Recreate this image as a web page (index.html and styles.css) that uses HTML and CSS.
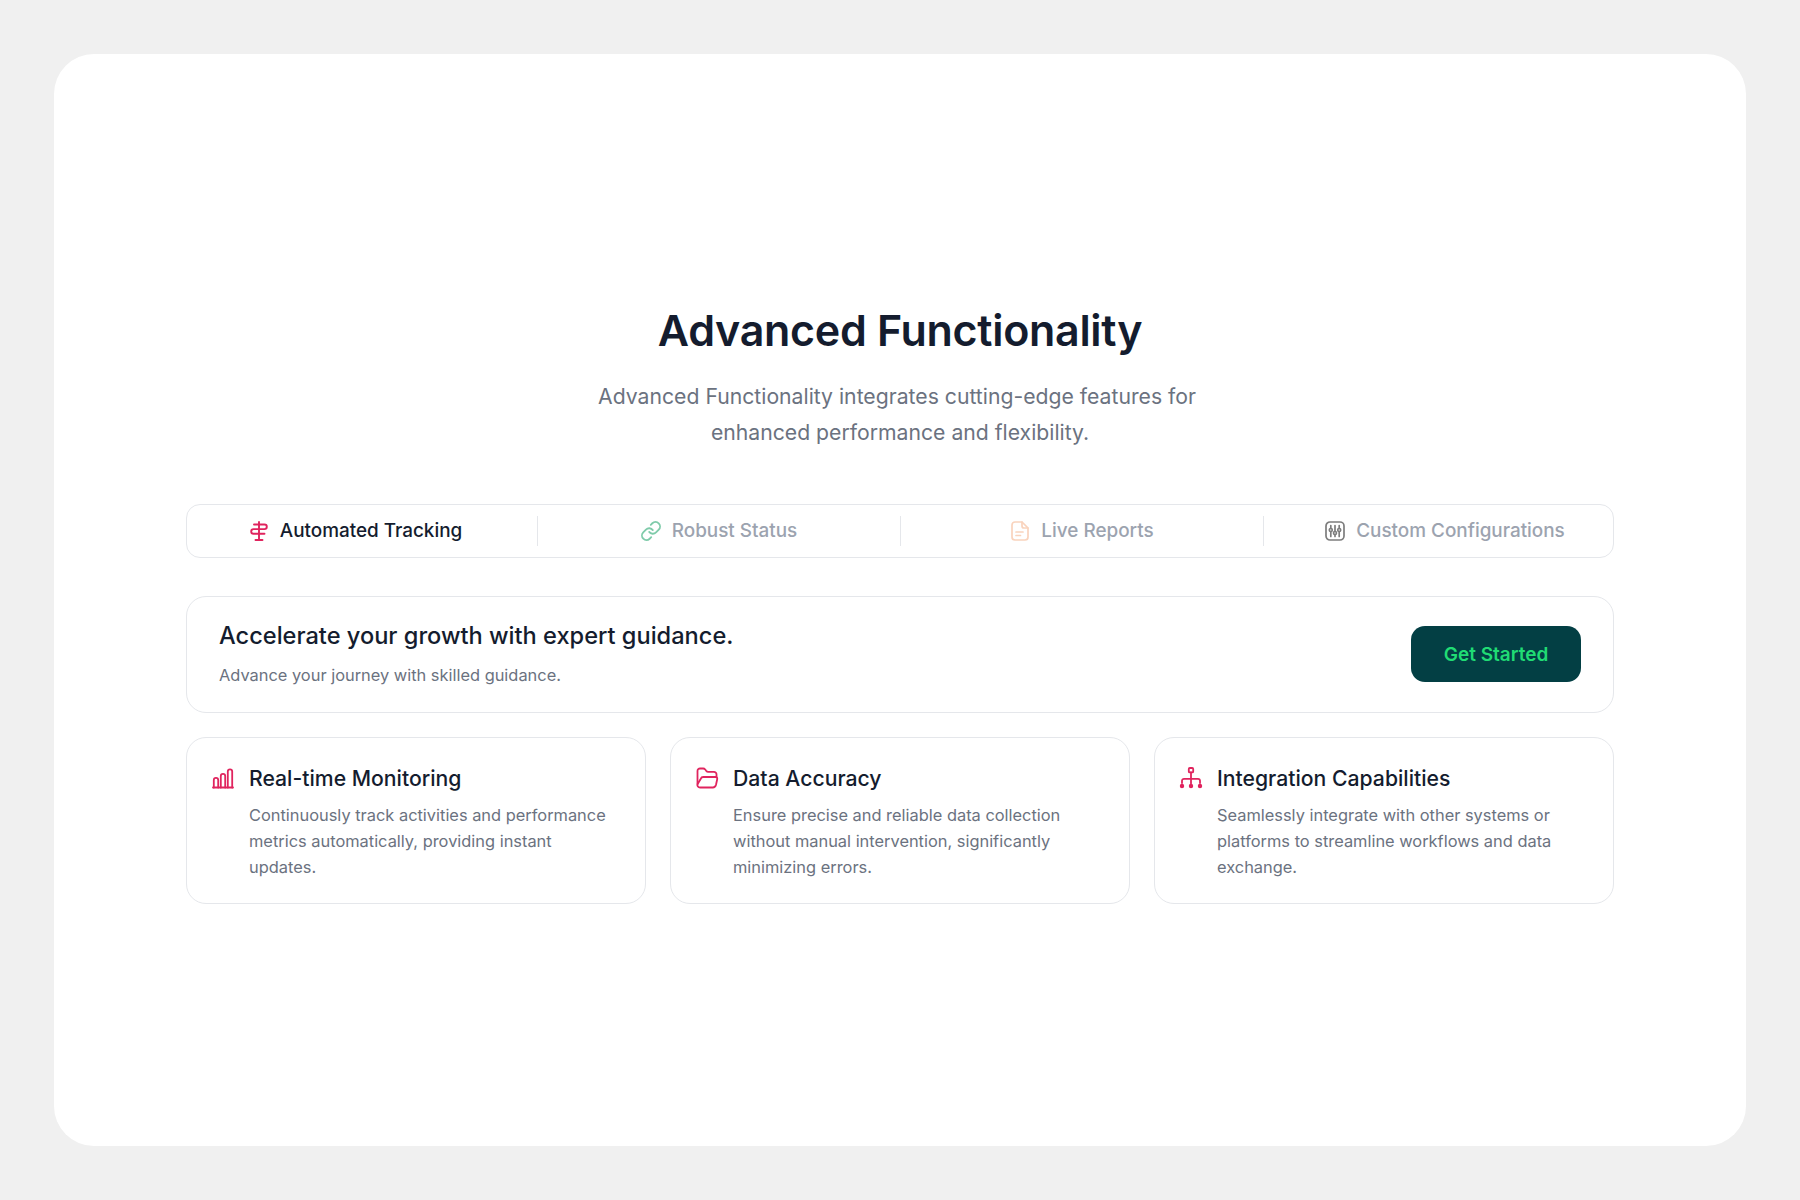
FILE: index.html
```html
<!DOCTYPE html>
<html lang="en">
<head>
    <meta charset="UTF-8">
    <meta name="viewport" content="width=device-width, initial-scale=1.0">
    <title>Advanced Functionality</title>
    <link rel="stylesheet" href="styles.css">
</head>
<body>
    <div class="panel">
        <div class="content">
            <div class="intro">
                <h1>Advanced Functionality</h1>
                <p>Advanced Functionality integrates cutting-edge features for&nbsp;<br>enhanced performance and flexibility.</p>
            </div>

            <div class="tabs">
                <div class="tab active">
                    <svg class="tab-icon" viewBox="0 0 20 20" fill="none" stroke="#e0245e" stroke-width="1.9" stroke-linecap="round" stroke-linejoin="round">
                        <path d="M10 1v18M6.5 19h7"/>
                        <path d="M5 3.5h10.5a2.3 2.3 0 0 1 0 4.6h-11a2.3 2.3 0 0 0 0 4.6h11"/>
                    </svg>
                    <span>Automated Tracking</span>
                </div>
                <div class="tab">
                    <svg class="tab-icon" viewBox="1 1 22 22" fill="none" stroke="#7fcbaa" stroke-width="2" stroke-linecap="round" stroke-linejoin="round">
                        <path d="M10 13a5 5 0 0 0 7.54.54l3-3a5 5 0 0 0-7.07-7.07l-1.72 1.71"/>
                        <path d="M14 11a5 5 0 0 0-7.54-.54l-3 3a5 5 0 0 0 7.07 7.07l1.71-1.71"/>
                    </svg>
                    <span>Robust Status</span>
                </div>
                <div class="tab">
                    <svg class="tab-icon" viewBox="0 0 20 20" fill="none" stroke="#f9d3bd" stroke-width="1.7" stroke-linecap="round" stroke-linejoin="round">
                        <path d="M12 1H5a3 3 0 0 0-3 3v12a3 3 0 0 0 3 3h10a3 3 0 0 0 3-3V7z"/>
                        <path d="M12 1v4a2 2 0 0 0 2 2h4M6 11h7M6 14.5h4.500"/>
                    </svg>
                    <span>Live Reports</span>
                </div>
                <div class="tab">
                    <svg class="tab-icon" viewBox="0 0 20 20" fill="none" stroke="#7d7d7d" stroke-width="1.7" stroke-linecap="round" stroke-linejoin="round">
                        <rect x="1" y="1" width="18" height="18" rx="4"/>
                        <path d="M5.8 4.5v2.5M5.8 11v4.500M10 4.500v5.500M10 14v1.500M14.200 4.500v2.500M14.200 11v4.500"/>
                        <circle cx="5.8" cy="9" r="1.5"/>
                        <circle cx="10" cy="12" r="1.5"/>
                        <circle cx="14.2" cy="9" r="1.5"/>
                    </svg>
                    <span>Custom Configurations</span>
                </div>
            </div>

            <div class="banner">
                <div>
                    <h2>Accelerate your growth with expert guidance.</h2>
                    <p>Advance your journey with skilled guidance.</p>
                </div>
                <button class="cta">Get Started</button>
            </div>

            <div class="features">
                <div class="feature">
                    <svg class="feature-icon" viewBox="0 0 24 24" fill="none" stroke="#e0245e" stroke-width="1.8" stroke-linecap="round" stroke-linejoin="round">
                        <path d="M2 21.5h20"/>
                        <path d="M2.8 21.5v-7.500a2.200 2.200 0 0 1 4.400 0v7.500M9.800 21.500v-11.500a2.200 2.200 0 0 1 4.400 0v11.500M16.800 21.500v-16a2.200 2.200 0 0 1 4.400 0v16"/>
                    </svg>
                    <div>
                        <h3>Real-time Monitoring</h3>
                        <p>Continuously track activities and performance metrics automatically, providing instant updates.</p>
                    </div>
                </div>
                <div class="feature">
                    <svg class="feature-icon" viewBox="0 0 24 24" fill="none" stroke="#e0245e" stroke-width="1.8" stroke-linecap="round" stroke-linejoin="round">
                        <path d="M2.5 18V5a2.5 2.5 0 0 1 2.5-2.5h3.200c.8 0 1.500.4 2 1l1 1.300c.5.6 1.200 1 2 1H19a2.500 2.500 0 0 1 2.500 2.500V11"/>
                        <path d="M5.8 12.700c.4-1 1.200-1.700 2.400-1.700h12.300c1.200 0 2 1 1.700 2.200l-1.200 5.600c-.4 1.600-1.500 2.700-3.200 2.700H5c-1.800 0-3-1.500-2.500-3.300z"/>
                    </svg>
                    <div>
                        <h3>Data Accuracy</h3>
                        <p>Ensure precise and reliable data collection without manual intervention, significantly minimizing errors.</p>
                    </div>
                </div>
                <div class="feature">
                    <svg class="feature-icon" viewBox="0 0 24 24" fill="none" stroke="#e0245e" stroke-width="1.8" stroke-linecap="round" stroke-linejoin="round">
                        <rect x="9.8" y="2" width="4.4" height="4.4" rx="1"/>
                        <path d="M12 6.400v11M3 17v-2.200a2 2 0 0 1 2-2h14a2 2 0 0 1 2 2V17"/>
                        <circle cx="3" cy="20" r="1.3" fill="#e0245e"/>
                        <circle cx="12" cy="20" r="1.3" fill="#e0245e"/>
                        <circle cx="21" cy="20" r="1.3" fill="#e0245e"/>
                    </svg>
                    <div>
                        <h3>Integration Capabilities</h3>
                        <p>Seamlessly integrate with other systems or platforms to streamline workflows and data exchange.</p>
                    </div>
                </div>
            </div>
        </div>
    </div>
</body>
</html>
```

FILE: styles.css
```css
* {
    box-sizing: border-box;
}
body {
    margin: 0;
    height: 1200px;
    padding: 54px;
    background: #f0f0f0;
    font-family: 'Inter', sans-serif;
    color: #141c2e;
}
.panel {
    height: 1092px;
    padding-top: 5px;
    background: #fff;
    border-radius: 40px;
    display: flex;
    justify-content: center;
    align-items: center;
}
.content {
    width: 1428px;
}
.intro {
    text-align: center;
}
.intro h1 {
    margin: 0;
    font-size: 43px;
    line-height: 56px;
    font-weight: 600;
    letter-spacing: -0.3px;
}
.intro p {
    margin: 20px 0 0;
    font-size: 21.2px;
    line-height: 36px;
    color: #6b7280;
}
.tabs {
    margin-top: 54px;
    height: 54px;
    display: grid;
    grid-template-columns: repeat(4, 363px);
    justify-content: center;
    align-items: center;
    border: 1px solid #e5e7eb;
    border-radius: 14px;
}
.tab {
    height: 30px;
    display: flex;
    justify-content: center;
    align-items: center;
    gap: 11px;
    font-size: 18.9px;
    font-weight: 500;
    color: #9ca3af;
    border-left: 1px solid #e5e7eb;
}
.tab:first-child {
    border-left: none;
}
.tab.active {
    color: #141c2e;
}
.tab-icon {
    width: 20px;
    height: 20px;
    flex: none;
}
.banner {
    margin-top: 38px;
    height: 117px;
    display: flex;
    justify-content: space-between;
    align-items: center;
    padding: 0 32px;
    border: 1px solid #e5e7eb;
    border-radius: 20px;
}
.banner h2 {
    margin: 0;
    font-size: 23.6px;
    line-height: 32px;
    font-weight: 500;
}
.banner p {
    margin: 10px 0 0;
    font-size: 16.4px;
    line-height: 26px;
    color: #6b7280;
}
.cta {
    width: 170px;
    height: 56px;
    border: none;
    border-radius: 14px;
    background: #033f44;
    color: #20dc74;
    font-family: inherit;
    font-size: 19px;
    font-weight: 600;
}
.features {
    margin-top: 24px;
    display: grid;
    grid-template-columns: repeat(3, 1fr);
    gap: 24px;
}
.feature {
    display: flex;
    gap: 14px;
    height: 167px;
    padding: 26px 24px 0;
    border: 1px solid #e5e7eb;
    border-radius: 20px;
}
.feature-icon {
    width: 24px;
    height: 24px;
    flex: none;
    margin-top: 2px;
}
.feature h3 {
    margin: 0;
    font-size: 21.2px;
    line-height: 28px;
    font-weight: 500;
}
.feature p {
    margin: 10px 0 0;
    font-size: 16.4px;
    line-height: 26px;
    color: #6b7280;
}
```
